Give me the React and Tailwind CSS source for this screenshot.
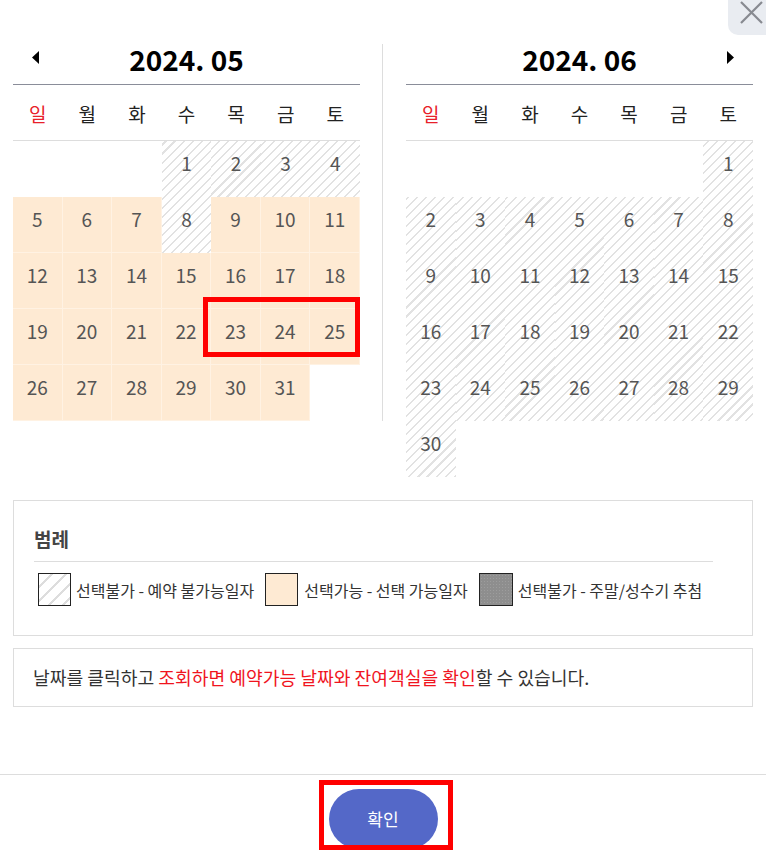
import React from "react";

const DAYS = ["일", "월", "화", "수", "목", "금", "토"];

const hatch =
  "bg-fixed bg-[image:repeating-linear-gradient(135deg,#ffffff_0px,#ffffff_4.9px,#e2e2e2_4.9px,#e2e2e2_6.4px)]";

function Arrow({ dir }) {
  return (
    <svg width="7" height="13" viewBox="0 0 7 13">
      {dir === "left" ? <path d="M7 0 L0 6.5 L7 13 Z" fill="#000" /> : <path d="M0 0 L7 6.5 L0 13 Z" fill="#000" />}
    </svg>
  );
}

function Month({ title, offset, total, blocked, allBlocked, arrow }) {
  const cells = [];
  for (let i = 0; i < offset + total; i++) {
    const day = i - offset + 1;
    cells.push(day >= 1 ? day : null);
  }

  return (
    <div className="w-[347px]">
      {/* header */}
      <div className="grid grid-cols-[1fr_auto_1fr] h-[41px] border-b border-[#8a8d99]">
        <div className="flex items-start pt-[7px] pl-[19px]">{arrow === "left" && <Arrow dir="left" />}</div>
        <div className="text-[28px] font-bold leading-[30px] text-black">{title}</div>
        <div className="flex items-start justify-end pt-[7px] pr-[19px]">{arrow === "right" && <Arrow dir="right" />}</div>
      </div>

      {/* day names */}
      <div className="grid grid-cols-7 h-[56px] border-b border-[#dddddd]">
        {DAYS.map((d, i) => (
          <div key={d} className={`flex items-center justify-center text-[19px] pt-[3px] ${i === 0 ? "text-[#e8202a]" : "text-[#222]"}`}>
            {d}
          </div>
        ))}
      </div>

      {/* dates */}
      <div className="grid grid-cols-7 auto-rows-[56px]">
        {cells.map((day, i) => {
          if (!day) return <div key={i} />;
          const isBlocked = allBlocked || blocked.includes(day);
          return (
            <div
              key={i}
              className={`flex justify-center pt-[8px] text-[19px] leading-[28px] text-[#555] ${
                isBlocked ? hatch : "bg-[#feead3] border-r border-b border-[#fff2e3]"
              }`}
            >
              {day}
            </div>
          );
        })}
      </div>
    </div>
  );
}

export default function App() {
  return (
    <div className="relative w-[766px] h-[854px] overflow-hidden bg-white font-['Noto_Sans_CJK_KR','Noto_Sans',sans-serif]">
      {/* close */}
      <button className="absolute top-0 right-0 w-[38px] h-[35px] bg-[#e9ecf1] rounded-bl-[10px]">
        <svg className="absolute left-[12px] top-[1px]" width="23" height="23" viewBox="0 0 23 23">
          <path d="M1 1 L22 22 M22 1 L1 22" stroke="#878a90" strokeWidth="2.2" />
        </svg>
      </button>

      {/* calendars */}
      <div className="flex items-start pl-[13px] pt-[44px]">
        <div className="w-[370px] pr-[22px] border-r border-[#dddddd]">
          <Month title="2024. 05" offset={3} total={31} blocked={[1, 2, 3, 4, 8]} arrow="left" />
        </div>
        <div className="pl-[23px]">
          <Month title="2024. 06" offset={6} total={30} blocked={[]} allBlocked arrow="right" />
        </div>
      </div>

      {/* legend */}
      <div className="mx-[13px] mt-[23px] h-[136px] border border-[#dddddd] px-[20px] pt-[24px]">
        <div className="mr-[19px] pb-[8px] border-b border-[#dddddd] text-[19px] font-bold leading-[28px] text-[#444]">범례</div>
        <div className="flex items-center gap-[11px] pl-[4px] mt-[11px] text-[16px] text-[#333]">
          <div className="flex items-center gap-[5px]">
            <span className="w-[33px] h-[33px] border border-[#222] bg-[image:repeating-linear-gradient(135deg,#ffffff_0px,#ffffff_8px,#dddddd_8px,#dddddd_10px)]" />
            <span>선택불가 - 예약 불가능일자</span>
          </div>
          <div className="flex items-center gap-[6px]">
            <span className="w-[33px] h-[33px] border border-[#222] bg-[#feead3]" />
            <span>선택가능 - 선택 가능일자</span>
          </div>
          <div className="flex items-center gap-[5px]">
            <span className="w-[34px] h-[33px] border border-[#222] bg-[#8e8e8e] bg-[image:radial-gradient(#9d9d9d_0.8px,transparent_0.8px)] bg-[length:3px_3px]" />
            <span>선택불가 - 주말/성수기 추첨</span>
          </div>
        </div>
      </div>

      {/* info */}
      <div className="mx-[13px] mt-[12px] h-[59px] border border-[#dddddd] flex items-center px-[19px] text-[18.2px] text-[#333]">
        <p>
          날짜를 클릭하고 <span className="text-[#f0141e]">조회하면 예약가능 날짜와 잔여객실을 확인</span>할 수 있습니다.
        </p>
      </div>

      {/* footer */}
      <div className="mt-[67px] border-t border-[#dddddd] flex justify-center pt-[14px]">
        <button className="w-[109px] h-[60px] rounded-full bg-[#5468c8] text-white text-[17px]">확인</button>
      </div>

      {/* annotation boxes */}
      <div className="absolute left-[203px] top-[297px] w-[157px] h-[60px] border-[5px] border-[#ff0000]" />
      <div className="absolute left-[319px] top-[780px] w-[134px] h-[70px] border-[5px] border-[#ff0000]" />
    </div>
  );
}
